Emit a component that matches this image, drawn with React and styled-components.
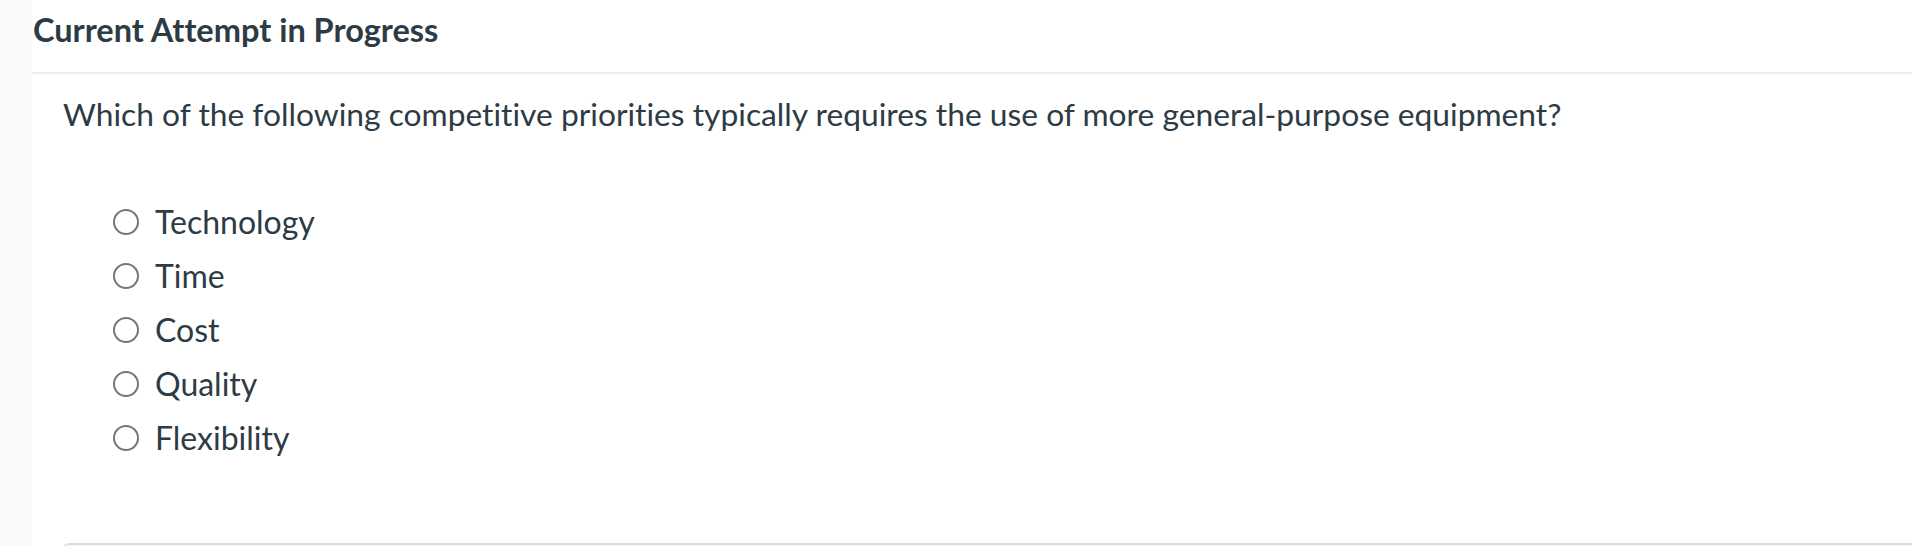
import React, { useState } from "react";
import styled, { createGlobalStyle } from "styled-components";

const GlobalStyle = createGlobalStyle`
  html, body {
    margin: 0;
    padding: 0;
    background: #fff;
    font-family: "Lato", "Noto Sans", sans-serif;
    color: #2d3b45;
    font-variant-ligatures: none;
    font-feature-settings: "liga" 0, "clig" 0;
  }
`;

const answers = ["Technology", "Time", "Cost", "Quality", "Flexibility"];

function App() {
  const [picked, setPicked] = useState(null);

  return (
    <Page>
      <GlobalStyle />
      <SideStrip />
      <Main>
        <Header>
          <Title>Current Attempt in Progress</Title>
        </Header>
        <QuestionBody>
          <QuestionText>
            Which of the following competitive priorities typically requires
            the use of more general-purpose equipment?
          </QuestionText>
          <AnswerList>
            {answers.map((a) => (
              <AnswerRow key={a} onClick={() => setPicked(a)}>
                <Radio checked={picked === a} />
                <AnswerLabel>{a}</AnswerLabel>
              </AnswerRow>
            ))}
          </AnswerList>
          <FooterCard />
        </QuestionBody>
      </Main>
    </Page>
  );
}

export default App;

const Page = styled.div`
  display: flex;
  height: 100vh;
  overflow: hidden;
`;

const SideStrip = styled.div`
  width: 32px;
  flex-shrink: 0;
  background: #fafafa;
`;

const Main = styled.div`
  flex: 1;
  display: flex;
  flex-direction: column;
`;

const Header = styled.div`
  flex-shrink: 0;
  height: 74px;
  box-sizing: border-box;
  padding-top: 12px;
  border-bottom: 2px solid #eeeeee;
`;

const Title = styled.h1`
  margin: 0;
  font-size: 32.5px;
  line-height: 36px;
  font-weight: 700;
  color: #2d3b45;
  padding-left: 1px;
`;

const QuestionBody = styled.div`
  flex-shrink: 0;
  padding-left: 31px;
  padding-top: 22px;
  display: flex;
  flex-direction: column;
`;

const QuestionText = styled.p`
  margin: 0;
  font-size: 31.75px;
  line-height: 37px;
  color: #2d3b45;
`;

const AnswerList = styled.div`
  margin-top: 62px;
  padding-left: 50px;
  display: flex;
  flex-direction: column;
`;

const AnswerRow = styled.label`
  display: flex;
  align-items: center;
  height: 54px;
  gap: 16px;
  cursor: pointer;
`;

const Radio = styled.span`
  width: 26px;
  height: 26px;
  box-sizing: border-box;
  border-radius: 50%;
  border: 2px solid #777777;
  background: ${(p) => (p.checked ? "radial-gradient(#2d3b45 40%, #fff 45%)" : "#fff")};
  flex-shrink: 0;
`;

const AnswerLabel = styled.span`
  font-size: 32px;
  line-height: 36px;
  color: #2d3b45;
`;

const FooterCard = styled.div`
  flex-shrink: 0;
  margin-top: 78px;
  height: 40px;
  border-top: 2px solid #dddddd;
  border-left: 2px solid #dddddd;
  border-top-left-radius: 6px;
  background: #f5f5f5;
`;
